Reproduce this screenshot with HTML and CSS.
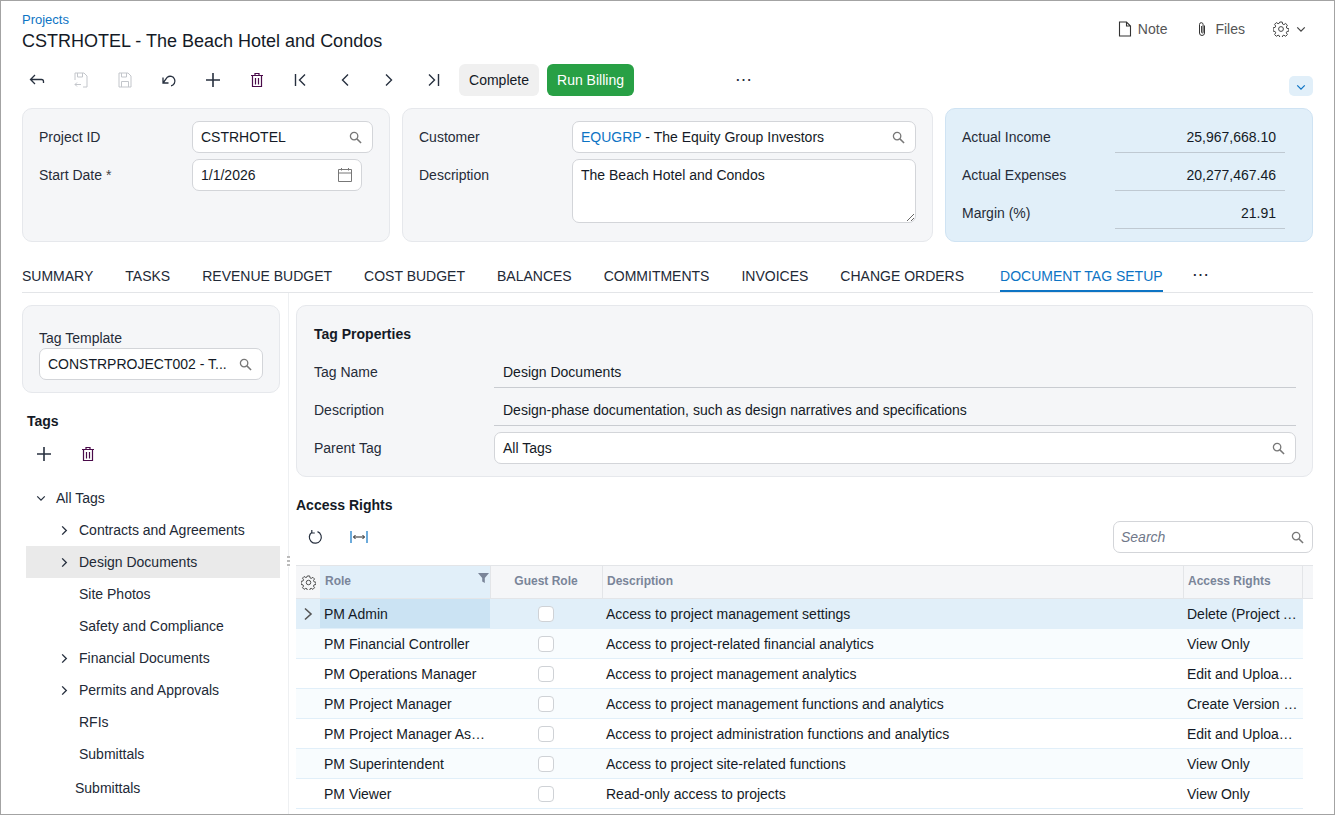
FILE: index.html
```html
<!DOCTYPE html>
<html lang="en">
<head>
    <meta charset="UTF-8">
    <meta name="viewport" content="width=device-width, initial-scale=1.0">
    <title>CSTRHOTEL - The Beach Hotel and Condos</title>
    <link rel="stylesheet" href="styles.css">
</head>
<body>
    <svg class="sprites" width="0" height="0">
        <symbol id="i-search" viewBox="0 0 14 14"><circle cx="5.5" cy="5.5" r="4" fill="none" stroke="currentColor" stroke-width="1.4"/><path d="M8.5 8.5L13 13" stroke="currentColor" stroke-width="1.6" fill="none"/></symbol>
        <symbol id="i-plus" viewBox="0 0 16 16"><path d="M8 1v14M1 8h14" stroke="currentColor" stroke-width="1.6" fill="none"/></symbol>
        <symbol id="i-trash" viewBox="0 0 14 16"><path d="M1 3.5h12M5 3.5V1.5h4v2M2.5 3.5v11h9v-11M5.5 6v6.500M8.500 6v6.500" stroke="currentColor" stroke-width="1.2" fill="none"/></symbol>
        <symbol id="i-gear" viewBox="0 0 16 16"><circle cx="8" cy="8" r="2.400" fill="none" stroke="currentColor" stroke-width="1"/><path d="M6.800 1h2.400l.4 2 1.300.6 1.800-1.100 1.700 1.700-1.100 1.800.6 1.300 2 .4v2.400l-2 .4-.6 1.300 1.100 1.800-1.700 1.700-1.800-1.100-1.300.6-.4 2H6.800l-.4-2-1.300-.6-1.800 1.100-1.700-1.700 1.100-1.800-.6-1.300-2-.4V6.800l2-.4.6-1.300-1.100-1.800 1.700-1.700 1.800 1.100 1.300-.6z" fill="none" stroke="currentColor" stroke-width="1"/></symbol>
        <symbol id="i-right" viewBox="0 0 8 12"><path d="M2 1.500L6.500 6 2 10.500" stroke="currentColor" stroke-width="1.500" fill="none"/></symbol>
        <symbol id="i-down" viewBox="0 0 12 8"><path d="M1.500 1.500L6 6l4.500-4.500" stroke="currentColor" stroke-width="1.500" fill="none"/></symbol>
    </svg>

    <div class="frame">
        <header class="page-head">
            <div>
                <a class="crumb">Projects</a>
                <h1 class="title">CSTRHOTEL - The Beach Hotel and Condos</h1>
            </div>
            <div class="head-actions">
                <span class="head-action">
                    <svg width="14" height="16" viewBox="0 0 14 16"><path d="M1.500 1h7l4 4v10h-11zM8.500 1v4h4" fill="none" stroke="#333" stroke-width="1.100"/></svg>
                    Note
                </span>
                <span class="head-action">
                    <svg width="14" height="16" viewBox="0 0 14 16"><path d="M9.500 4.500v7.500a2.500 2.500 0 0 1-5 0V3.500a1.800 1.800 0 0 1 3.600 0V11.500a.8.8 0 0 1-1.500 0V5" fill="none" stroke="#333" stroke-width="1"/></svg>
                    Files
                </span>
                <span class="head-gear">
                    <svg class="icon-gear" width="16" height="16"><use href="#i-gear"/></svg>
                    <svg width="10" height="7"><use href="#i-down"/></svg>
                </span>
            </div>
        </header>

        <div class="toolbar">
            <button class="tool">
                <svg width="16" height="14" viewBox="0 0 16 14"><path d="M6 2L1.500 6.500 6 11M1.500 6.500H12.500a2 2 0 0 1 2 2v1.500" fill="none" stroke="currentColor" stroke-width="1.300"/></svg>
            </button>
            <button class="tool off">
                <svg width="14" height="16" viewBox="0 0 14 16"><path d="M9 15h4V4l-3-3H1v7M3.500 1v4h5V1M1 12.500h6M3 10.500l-2 2 2 2M1 15" fill="none" stroke="currentColor" stroke-width="1"/></svg>
            </button>
            <button class="tool off">
                <svg width="14" height="16" viewBox="0 0 14 16"><path d="M1 1h9l3 3v11H1zM3.500 1v4h5V1M3.500 15V9.500h7V15" fill="none" stroke="currentColor" stroke-width="1"/></svg>
            </button>
            <button class="tool">
                <svg width="16" height="14" viewBox="0 0 16 14"><path d="M2 4.500v5.500h5.500M2 10L6.300 4.200A4.800 4.800 0 1 1 10 12.800" fill="none" stroke="currentColor" stroke-width="1.300"/></svg>
            </button>
            <button class="tool"><svg width="16" height="16"><use href="#i-plus"/></svg></button>
            <button class="tool"><svg class="icon-trash" width="14" height="16"><use href="#i-trash"/></svg></button>
            <button class="tool">
                <svg width="14" height="14" viewBox="0 0 14 14"><path d="M1.500 1v12M11 1.500L5.500 7l5.500 5.500" fill="none" stroke="currentColor" stroke-width="1.400"/></svg>
            </button>
            <button class="tool">
                <svg width="8" height="14" viewBox="0 0 8 14"><path d="M7 1.500L1.500 7 7 12.500" fill="none" stroke="currentColor" stroke-width="1.400"/></svg>
            </button>
            <button class="tool">
                <svg width="8" height="14" viewBox="0 0 8 14"><path d="M1 1.500L6.500 7 1 12.500" fill="none" stroke="currentColor" stroke-width="1.400"/></svg>
            </button>
            <button class="tool">
                <svg width="14" height="14" viewBox="0 0 14 14"><path d="M12.500 1v12M3 1.500L8.500 7 3 12.500" fill="none" stroke="currentColor" stroke-width="1.400"/></svg>
            </button>
            <button class="btn btn-plain">Complete</button>
            <button class="btn btn-green">Run Billing</button>
            <button class="tool tool-more">&#8943;</button>
            <button class="collapse"><svg width="10" height="7"><use href="#i-down"/></svg></button>
        </div>

        <section class="summary">
            <div class="card card-id">
                <div class="form-row">
                    <label>Project ID</label>
                    <div class="field field-wide"><span>CSTRHOTEL</span><svg class="mag" width="13" height="13"><use href="#i-search"/></svg></div>
                </div>
                <div class="form-row">
                    <label>Start Date <span class="req">*</span></label>
                    <div class="field field-date"><span>1/1/2026</span>
                        <svg class="mag" width="16" height="16" viewBox="0 0 16 16"><path d="M1.500 2.500h13v12h-13zM1.500 6h13M4.500 1v2.500M11.500 1v2.500" fill="none" stroke="currentColor" stroke-width="1"/></svg>
                    </div>
                </div>
            </div>
            <div class="card card-customer">
                <div class="form-row">
                    <label>Customer</label>
                    <div class="field field-fill"><span><a class="link">EQUGRP</a> - The Equity Group Investors</span><svg class="mag" width="13" height="13"><use href="#i-search"/></svg></div>
                </div>
                <div class="form-row">
                    <label>Description</label>
                    <div class="field field-fill field-area"><span>The Beach Hotel and Condos</span>
                        <svg class="grip" width="8" height="8" viewBox="0 0 8 8"><path d="M1 8l7-7M5 8l3-3" stroke="#666" stroke-width="1"/></svg>
                    </div>
                </div>
            </div>
            <div class="card card-totals">
                <div class="total-row"><label>Actual Income</label><span class="total">25,967,668.10</span></div>
                <div class="total-row"><label>Actual Expenses</label><span class="total">20,277,467.46</span></div>
                <div class="total-row"><label>Margin (%)</label><span class="total">21.91</span></div>
            </div>
        </section>

        <nav class="tabs">
            <a class="tab">SUMMARY</a>
            <a class="tab">TASKS</a>
            <a class="tab">REVENUE BUDGET</a>
            <a class="tab">COST BUDGET</a>
            <a class="tab">BALANCES</a>
            <a class="tab">COMMITMENTS</a>
            <a class="tab">INVOICES</a>
            <a class="tab">CHANGE ORDERS</a>
            <a class="tab active">DOCUMENT TAG SETUP</a>
            <a class="tab tab-more">&#8943;</a>
        </nav>

        <div class="workspace">
            <aside class="side">
                <div class="card card-template">
                    <label>Tag Template</label>
                    <div class="field"><span>CONSTRPROJECT002 - T...</span><svg class="mag" width="13" height="13"><use href="#i-search"/></svg></div>
                </div>
                <h2 class="heading heading-tags">Tags</h2>
                <div class="tree-tools">
                    <button class="tool"><svg width="16" height="16"><use href="#i-plus"/></svg></button>
                    <button class="tool"><svg class="icon-trash" width="14" height="16"><use href="#i-trash"/></svg></button>
                </div>
                <ul class="tree">
                    <li class="node node-root"><svg width="10" height="7"><use href="#i-down"/></svg><span>All Tags</span></li>
                    <li class="node"><svg width="8" height="11"><use href="#i-right"/></svg><span>Contracts and Agreements</span></li>
                    <li class="node selected"><svg width="8" height="11"><use href="#i-right"/></svg><span>Design Documents</span></li>
                    <li class="node leaf"><span>Site Photos</span></li>
                    <li class="node leaf"><span>Safety and Compliance</span></li>
                    <li class="node"><svg width="8" height="11"><use href="#i-right"/></svg><span>Financial Documents</span></li>
                    <li class="node"><svg width="8" height="11"><use href="#i-right"/></svg><span>Permits and Approvals</span></li>
                    <li class="node leaf"><span>RFIs</span></li>
                    <li class="node leaf"><span>Submittals</span></li>
                    <li class="node node-last"><span>Submittals</span></li>
                </ul>
            </aside>

            <div class="splitter"><span class="splitter-grip"></span></div>

            <main class="detail">
                <div class="card card-props">
                    <h2 class="heading">Tag Properties</h2>
                    <div class="prop-row"><label>Tag Name</label><div class="prop-value">Design Documents</div></div>
                    <div class="prop-row"><label>Description</label><div class="prop-value">Design-phase documentation, such as design narratives and specifications</div></div>
                    <div class="prop-row prop-field"><label>Parent Tag</label><div class="field field-fill"><span>All Tags</span><svg class="mag" width="13" height="13"><use href="#i-search"/></svg></div></div>
                </div>

                <h2 class="heading heading-access">Access Rights</h2>
                <div class="grid-tools">
                    <button class="tool">
                        <svg width="16" height="16" viewBox="0 0 16 16"><path d="M5 3.200A6 6 0 1 0 10.500 2.600M4.800 1v3h3" fill="none" stroke="currentColor" stroke-width="1.200"/></svg>
                    </button>
                    <button class="tool tool-fit">
                        <svg width="18" height="14" viewBox="0 0 18 14"><path d="M1 1v12M17 1v12" stroke="#0d74c4" stroke-width="1.200"/><path d="M3.500 7h11M5.500 5l-2 2 2 2M12.500 5l2 2-2 2" fill="none" stroke="#222" stroke-width="1"/></svg>
                    </button>
                    <div class="field field-search"><span>Search</span><svg class="mag" width="13" height="13"><use href="#i-search"/></svg></div>
                </div>

                <table class="grid">
                    <colgroup><col class="c-mark"><col class="c-role"><col class="c-guest"><col class="c-desc"><col class="c-rights"><col class="c-tail"></colgroup>
                    <thead>
                        <tr>
                            <th class="mark"><svg class="icon-gear" width="15" height="15"><use href="#i-gear"/></svg></th>
                            <th class="th-role">Role<svg class="funnel" width="11" height="10" viewBox="0 0 11 10"><path d="M0 0h11L6.800 5v5L4.200 8.500V5z" fill="#7a8599"/></svg></th>
                            <th class="th-guest">Guest Role</th>
                            <th>Description</th>
                            <th class="th-rights">Access Rights</th>
                            <th class="tail"></th>
                        </tr>
                    </thead>
                    <tbody>
                        <tr class="current">
                            <td class="mark"><svg width="10" height="14" viewBox="0 0 10 14"><path d="M2 1.500L8 7l-6 5.500" fill="none" stroke="#555" stroke-width="1.600"/></svg></td>
                            <td class="cell-role">PM Admin</td><td class="guest"><span class="check"></span></td>
                            <td>Access to project management settings</td><td>Delete (Project Admin)</td><td class="tail"></td>
                        </tr>
                        <tr class="tint">
                            <td class="mark"></td><td>PM Financial Controller</td><td class="guest"><span class="check"></span></td>
                            <td>Access to project-related financial analytics</td><td>View Only</td><td class="tail"></td>
                        </tr>
                        <tr>
                            <td class="mark"></td><td>PM Operations Manager</td><td class="guest"><span class="check"></span></td>
                            <td>Access to project management analytics</td><td>Edit and Upload Files</td><td class="tail"></td>
                        </tr>
                        <tr class="tint">
                            <td class="mark"></td><td>PM Project Manager</td><td class="guest"><span class="check"></span></td>
                            <td>Access to project management functions and analytics</td><td>Create Version and Edit</td><td class="tail"></td>
                        </tr>
                        <tr>
                            <td class="mark"></td><td>PM Project Manager Assistant</td><td class="guest"><span class="check"></span></td>
                            <td>Access to project administration functions and analytics</td><td>Edit and Upload Files</td><td class="tail"></td>
                        </tr>
                        <tr class="tint">
                            <td class="mark"></td><td>PM Superintendent</td><td class="guest"><span class="check"></span></td>
                            <td>Access to project site-related functions</td><td>View Only</td><td class="tail"></td>
                        </tr>
                        <tr>
                            <td class="mark"></td><td>PM Viewer</td><td class="guest"><span class="check"></span></td>
                            <td>Read-only access to projects</td><td>View Only</td><td class="tail"></td>
                        </tr>
                    </tbody>
                </table>
            </main>
        </div>
    </div>
</body>
</html>
```

FILE: styles.css
```css
* {
    box-sizing: border-box;
}
html, body {
    margin: 0;
    height: 100%;
    overflow: hidden;
}
body {
    font-family: "Liberation Sans", Arial, sans-serif;
    font-size: 14px;
    color: #141a26;
    background-color: white;
}
.sprites {
    display: block;
    height: 0;
}
.frame {
    width: 1335px;
    height: 815px;
    border: 1px solid #a3a3a3;
    padding: 0 21px;
    overflow: hidden;
}
button {
    font-family: inherit;
    font-size: 14px;
    border: none;
    background: none;
    padding: 0;
    color: inherit;
}
label {
    color: #262c38;
}

/* header */
.page-head {
    display: flex;
    justify-content: space-between;
    padding-top: 11px;
}
.crumb {
    display: block;
    font-size: 13px;
    line-height: 16px;
    color: #0d74c4;
}
.title {
    margin: 1px 0 0;
    font-size: 18px;
    font-weight: normal;
    line-height: 24px;
}
.head-actions {
    display: flex;
    align-items: center;
    height: 34px;
    color: #555;
}
.head-action {
    display: flex;
    align-items: center;
    gap: 6px;
    margin-right: 28px;
}
.head-gear {
    display: flex;
    align-items: center;
    gap: 7px;
    margin-right: 7px;
    color: #444;
}
.icon-gear {
    color: #444;
}
.icon-trash {
    color: #4a0b4a;
}

/* toolbar */
.toolbar {
    display: flex;
    margin: 11px 0 0 -7px;
    height: 32px;
}
.tool {
    width: 44px;
    height: 32px;
    display: flex;
    align-items: center;
    justify-content: center;
    color: #27303f;
}
.tool.off {
    color: #c3c6cb;
}
.tool-more {
    margin-left: 87px;
    font-size: 17px;
    padding-bottom: 2px;
}
.btn {
    height: 32px;
    border-radius: 6px;
    padding: 0 10px;
    margin-left: 4px;
}
.btn-plain {
    width: 80px;
    margin-left: 4px;
    background-color: #f0f0f0;
}
.btn-green {
    width: 87px;
    margin-left: 8px;
    padding: 0;
    background-color: #28a045;
    color: white;
}
.collapse {
    width: 24px;
    height: 20px;
    margin-left: auto;
    margin-top: 12px;
    border-radius: 5px;
    background-color: #e1eff9;
    color: #0d74c4;
}

/* cards */
.card {
    background-color: #f5f6f8;
    border: 1px solid #e6e8ec;
    border-radius: 10px;
}
.summary {
    display: grid;
    grid-template-columns: 368px 531px 368px;
    gap: 12px;
    margin-top: 12px;
    height: 134px;
}
.card-id, .card-customer {
    padding: 12px 16px;
}
.form-row {
    display: flex;
    align-items: flex-start;
    margin-bottom: 6px;
}
.form-row label {
    width: 153px;
    line-height: 32px;
    flex: none;
}
.req {
    color: #444;
}
.field {
    position: relative;
    display: flex;
    align-items: center;
    justify-content: space-between;
    height: 32px;
    padding: 0 10px 0 8px;
    background-color: white;
    border: 1px solid #d3d5d9;
    border-radius: 7px;
    white-space: nowrap;
}
.mag {
    color: #777;
    flex: none;
}
.field-wide {
    width: 181px;
}
.field-date {
    width: 170px;
    padding-right: 8px;
}
.field-fill {
    flex: 1;
}
.field-area {
    height: 64px;
    align-items: flex-start;
    padding-top: 7px;
}
.grip {
    position: absolute;
    right: 1px;
    bottom: 1px;
}
.link {
    color: #0d74c4;
}
.card-totals {
    background-color: #e1eff9;
    border-color: #cfe3f3;
    padding: 12px 27px 0 16px;
}
.total-row {
    display: flex;
    justify-content: space-between;
    height: 38px;
}
.total-row label {
    line-height: 32px;
}
.total {
    width: 170px;
    height: 32px;
    line-height: 32px;
    padding-right: 9px;
    text-align: right;
    border-bottom: 1px solid #bfc9d2;
}

/* tabs */
.tabs {
    display: flex;
    gap: 32px;
    margin-top: 18px;
    height: 33px;
    border-bottom: 1px solid #e3e5e8;
}
.tab {
    height: 32px;
    line-height: 32px;
    white-space: nowrap;
    color: #222936;
}
.tab.active {
    margin-left: 4px;
    color: #0d74c4;
    border-bottom: 2px solid #0d74c4;
}
.tab-more {
    margin-left: -3px;
    font-size: 17px;
    line-height: 30px;
}

/* lower area */
.workspace {
    display: flex;
}
.side {
    width: 258px;
    flex: none;
    padding-top: 12px;
}
.card-template {
    height: 88px;
    padding: 23px 16px 0;
}
.card-template label {
    display: block;
    line-height: 18px;
}
.card-template .field {
    width: 224px;
    margin-top: 1px;
}
.heading {
    margin: 0;
    font-size: 14px;
    font-weight: bold;
    line-height: 20px;
}
.heading-tags {
    margin: 18px 0 0 5px;
}
.tree-tools {
    display: flex;
    margin-top: 7px;
    height: 32px;
}
.tree {
    list-style: none;
    margin: 12px 0 0 4px;
    padding: 0;
}
.node {
    display: flex;
    align-items: center;
    height: 32px;
    padding-left: 34px;
    color: #222936;
}
.node svg {
    flex: none;
    color: #27303f;
}
.node span {
    margin-left: 11px;
}
.node.leaf span {
    margin-left: 19px;
}
.node-root {
    padding-left: 10px;
}
.node-root span {
    margin-left: 10px;
}
.node.selected {
    background-color: #eaeaea;
}
.node-last {
    padding-left: 49px;
    margin-top: 2px;
}
.node-last span {
    margin-left: 0;
}

.splitter {
    position: relative;
    width: 16px;
    flex: none;
    height: 522px;
}
.splitter::before {
    content: "";
    position: absolute;
    left: 8px;
    top: 0;
    bottom: 0;
    border-left: 1px solid #eef0f2;
}
.splitter-grip {
    position: absolute;
    left: 7px;
    top: 263px;
    width: 3px;
    height: 11px;
    background: repeating-linear-gradient(#bbb 0 2px, white 2px 4px);
}

.detail {
    width: 1017px;
    flex: none;
    padding-top: 12px;
}
.card-props {
    height: 172px;
    padding: 18px 16px 0 17px;
}
.card-props .heading {
    margin-bottom: 12px;
}
.prop-row {
    display: flex;
    height: 38px;
}
.prop-row label {
    width: 180px;
    flex: none;
    line-height: 32px;
}
.prop-value {
    flex: 1;
    height: 32px;
    line-height: 32px;
    padding-left: 9px;
    border-bottom: 1px solid #c9ccd1;
}
.heading-access {
    margin-top: 18px;
}
.grid-tools {
    display: flex;
    align-items: center;
    margin-top: 6px;
    height: 32px;
}
.grid-tools .tool {
    width: 38px;
}
.grid-tools .tool-fit {
    margin-left: 6px;
}
.field-search {
    width: 200px;
    margin-left: auto;
    padding: 0 8px 0 7px;
    color: #70788a;
    font-style: italic;
}

/* access rights table */
.grid {
    width: 1017px;
    margin-top: 12px;
    table-layout: fixed;
    border-collapse: separate;
    border-spacing: 0;
}
.c-mark { width: 24px; }
.c-role { width: 170px; }
.c-guest { width: 112px; }
.c-desc { width: 581px; }
.c-rights { width: 120px; }
.c-tail { width: 10px; }
.grid th {
    height: 34px;
    padding: 0 5px 2px 5px;
    text-align: left;
    font-size: 12px;
    font-weight: bold;
    color: #7a8599;
    background-color: #f5f6f8;
    border-top: 1px solid #e3e5e8;
    border-bottom: 1px solid #e3e5e8;
}
.grid th + th:not(.th-role):not(.tail) {
    padding-left: 4px;
    border-left: 1px solid #e3e5e8;
}
.grid .th-rights {
    border-right: 1px solid #e3e5e8;
}
.grid .th-role {
    position: relative;
    background-color: #e1eff9;
}
.funnel {
    position: absolute;
    right: 1px;
    top: 7px;
}
.grid .th-guest {
    text-align: center;
}
.grid th.mark {
    padding: 0;
    text-align: center;
}
.grid th.mark svg {
    vertical-align: middle;
}
.grid td {
    height: 30px;
    padding: 0 4px;
    white-space: nowrap;
    overflow: hidden;
    text-overflow: ellipsis;
    border-bottom: 1px solid #e1eff9;
}
.grid td.mark {
    padding: 0 0 0 7px;
}
.grid td.mark svg {
    display: block;
}
.grid td.tail {
    background-color: white;
    border-bottom: none;
}
.grid .tint td:not(.tail) {
    background-color: #f8fcfe;
}
.grid .current td:not(.tail) {
    background-color: #e1eff9;
}
.grid .current .cell-role:not(.tail) {
    background-color: #cbe3f3;
}
.grid td.guest {
    padding: 0;
    text-align: center;
}
.check {
    display: inline-block;
    width: 16px;
    height: 16px;
    vertical-align: middle;
    background-color: white;
    border: 1px solid #cfd2d6;
    border-radius: 4px;
}
```
